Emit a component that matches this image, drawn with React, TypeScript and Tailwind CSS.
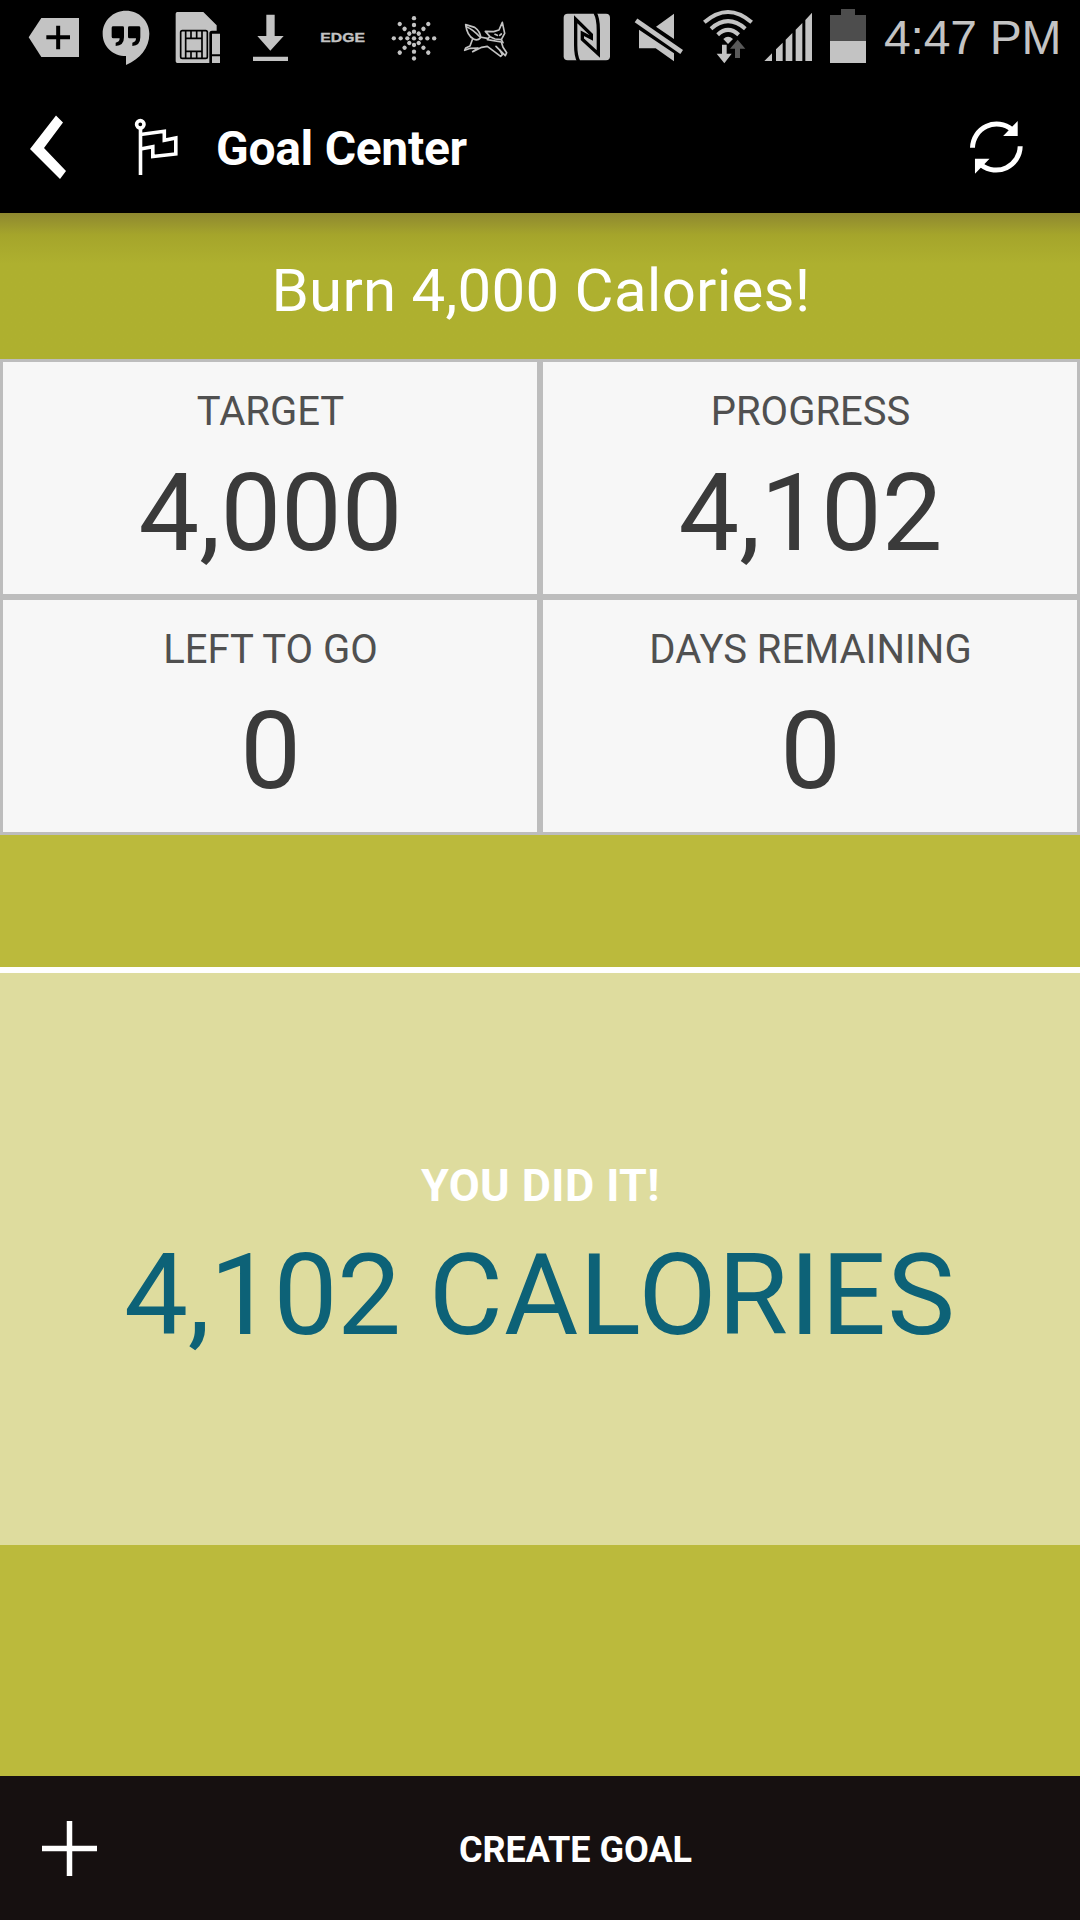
import React from "react";

const stats = [
  { label: "TARGET", value: "4,000" },
  { label: "PROGRESS", value: "4,102" },
  { label: "LEFT TO GO", value: "0" },
  { label: "DAYS REMAINING", value: "0" },
];

// dots of the starburst notification icon
const rays = [0, 45, 90, 135, 180, 225, 270, 315];

function StatusIcon({
  viewBox,
  className = "w-[72px]",
  children,
}: {
  viewBox: string;
  className?: string;
  children: React.ReactNode;
}) {
  return (
    <svg
      viewBox={viewBox}
      className={`h-[75px] shrink-0 ${className}`}
      fill="#c3c3c3"
    >
      {children}
    </svg>
  );
}

function StatusBar() {
  return (
    <div className="flex h-[75px] items-center bg-black pl-[18px]">
      <StatusIcon viewBox="54 0 216 225">
        <path d="M86 112L124 54H237V171H124Z" />
        <path d="M139 112H210M174.500 77V148" stroke="#000" strokeWidth="12" />
      </StatusIcon>
      <StatusIcon viewBox="270 0 216 225">
        <path d="M378 32C417 32 448 62 448 101C448 144 420 176 378 195V168C339 168 308 140 308 101C308 62 339 32 378 32Z" />
        <path
          d="M340 79H368Q372 79 372 83V112Q372 137 347 138V128Q359 126 359 115H340Q335 115 335 110V83Q335 79 340 79ZM388 79H416Q421 79 421 83V112Q421 137 397 138V128Q408 126 408 115H388Q384 115 384 110V83Q384 79 388 79Z"
          fill="#000"
        />
      </StatusIcon>
      <StatusIcon viewBox="486 0 216 225">
        <path d="M532 36H610L650 76V92H636Q628 92 628 100V189H532Q527 189 527 184V41Q527 36 532 36Z" />
        <path d="M636 101H660V163H636ZM636 169H660V189H636Z" />
        <g fill="none" stroke="#000" strokeWidth="5">
          <rect x="542" y="92" width="80" height="83" rx="5" />
          <path d="M557 92V175M606 92V175M557 115H606M557 154H606M573 92V115M590 92V115M573 154V175M590 154V175" />
        </g>
      </StatusIcon>
      <StatusIcon viewBox="-18 0 216 225">
        <path d="M79 44H104V108H131L91 152L52 108H79ZM39 170H144V183H39Z" />
      </StatusIcon>
      <StatusIcon viewBox="198 0 216 225">
        <text
          x="241"
          y="127"
          fontFamily="Liberation Sans, sans-serif"
          fontWeight="700"
          fontSize="39"
          stroke="#c3c3c3"
          strokeWidth="1"
          textLength="134"
          lengthAdjust="spacingAndGlyphs"
        >
          EDGE
        </text>
      </StatusIcon>
      <StatusIcon viewBox="414 0 216 225">
        <circle cx="522" cy="115" r="6.500" />
        {rays.map((angle) => (
          <g key={angle} transform={`rotate(${angle} 522 115)`}>
            <circle cx="542" cy="115" r="6.500" />
            <circle cx="562" cy="115" r="6.500" />
            <circle cx="582.500" cy="115" r="6.500" />
          </g>
        ))}
      </StatusIcon>
      <StatusIcon viewBox="630 0 216 225">
        <g
          fill="none"
          stroke="#c3c3c3"
          strokeWidth="5"
          strokeLinejoin="round"
          strokeLinecap="round"
        >
          <path d="M677 74L704 82Q721 94 722 113Q713 123 702 118Q681 108 677 74Z" />
          <path d="M679 80Q699 88 720 111L742 115" />
          <path d="M736 94L761 95L777 90L787 67L794 100L784 119L765 117L750 110Z" />
          <path d="M748 111L742 119L784 126L789 142L800 158L796 167L780 151L787 164L782 169L758 151L742 139L725 142L698 155L714 144L691 145L674 151L677 144L690 138L697 119" />
          <path d="M765 103L772 106M784 102L779 106M784 119L789 128M768 139L780 151" />
        </g>
      </StatusIcon>

      <div className="ml-auto flex items-center">
        <StatusIcon viewBox="33 0 216 225">
          <rect x="71" y="41" width="139" height="140" rx="12" />
          <path
            d="M116 184Q107 168 107 135V58L154 104V114L127 100V118L175 162V90Q175 55 165 38"
            fill="none"
            stroke="#000"
            strokeWidth="10"
          />
        </StatusIcon>
        <StatusIcon viewBox="249 0 216 225">
          <path d="M297 89L402 160V184L347 145H297ZM348 80L402 41V117Z" />
          <path d="M288 61L425 156" stroke="#c3c3c3" strokeWidth="14" />
        </StatusIcon>
        <StatusIcon viewBox="465 0 195 225" className="w-[65px]">
          <g fill="none" stroke="#c3c3c3" strokeWidth="12">
            <path d="M493 67Q564 5 635 67" />
            <path d="M513 86Q564 41 616 86" />
            <path d="M533 104Q564 75 596 104" />
          </g>
          <path d="M550 117Q564 104 579 117L564 132Z" />
          <path d="M546 134H560V161H575L553 190L530 161H546Z" />
          <path d="M593 119L616 146H600V174H585V146H570Z" fill="#595959" />
        </StatusIcon>
        <StatusIcon viewBox="660 0 180 225" className="w-[60px]">
          <path d="M673 183L696 160V183ZM708 148L728 128V183H708ZM737 119L757 99V183H737ZM767 89L787 69V183H767ZM796 60L816 38V183H796Z" />
        </StatusIcon>
        <StatusIcon viewBox="30 0 165 225" className="w-[55px]">
          <path d="M93 27H135V45H168V123H60V45H93Z" fill="#4d4d4d" />
          <path d="M60 123H168V189H60Z" />
        </StatusIcon>
        <span className="w-[205px] pl-[9px] font-['Liberation_Sans',sans-serif] text-[48px] leading-none tracking-[-0.2px] whitespace-nowrap text-[#c3c3c3]">
          4:47 PM
        </span>
      </div>
    </div>
  );
}

function Header() {
  return (
    <header className="flex h-[138px] items-center bg-black pt-[6px] pl-[30px]">
      <svg viewBox="0 0 36 64" className="h-16 w-9" fill="#fff">
        <path d="M26 0.500L33 7.500L14 33L36 56L30 64L0 34Z" />
      </svg>
      <svg
        viewBox="134 118 46 60"
        className="mt-0.5 ml-[68px] h-[60px] w-[46px]"
        fill="none"
        stroke="#fff"
        strokeWidth="3.600"
      >
        <circle cx="140.300" cy="124.300" r="3.700" />
        <path d="M140.500 128V175" />
        <path d="M140.500 134.500L164.300 131.300V140.300L175.800 138V154L152.800 156.500V146.700L140.500 149" />
      </svg>
      <h1 className="mt-[3px] ml-9 text-[48px] leading-[60px] font-bold tracking-[-0.3px]">
        Goal Center
      </h1>
      <svg
        viewBox="90 90 160 160"
        className="mr-[57px] ml-auto h-[53px] w-[53px]"
        fill="none"
        stroke="#fff"
        strokeWidth="15"
      >
        <path d="M97.500 171A73 73 0 0 1 217 116M241.500 166A73 73 0 0 1 124 223" />
        <path d="M234 90V135H190ZM105 249V204H149Z" fill="#fff" stroke="none" />
      </svg>
    </header>
  );
}

export default function App() {
  return (
    <div className="flex h-[1920px] w-[1080px] flex-col overflow-hidden bg-[#bbba3c] font-[Roboto,sans-serif] text-white">
      <StatusBar />
      <Header />

      <div className="flex h-[146px] items-center justify-center bg-linear-to-b from-[#8e882f] via-[#a5a52b] via-15% to-[#aeb02f] to-35% pt-2.5 pl-[2px]">
        <h2 className="text-[60px] leading-none tracking-[0.25px]">
          Burn 4,000 Calories!
        </h2>
      </div>

      <div className="grid grid-cols-2">
        {stats.map((stat) => (
          <div
            key={stat.label}
            className="flex h-[238px] flex-col items-center border-[3px] border-[#bdbdbd] bg-[#f7f7f7] pt-[30px] pl-px"
          >
            <div className="text-[40px] leading-none text-[#505050]">
              {stat.label}
            </div>
            <div className="mt-[27px] text-[108px] leading-none text-[#3a3a3a]">
              {stat.value}
            </div>
          </div>
        ))}
      </div>

      <div className="mt-[132px] flex h-[578px] flex-col items-center border-t-[6px] border-white bg-[#dedc9e] pt-[190px]">
        <div className="pl-px text-[45px] leading-none font-bold tracking-[0.4px]">
          YOU DID IT!
        </div>
        <div className="mt-[30px] text-[114px] leading-none whitespace-nowrap text-[#0d6277]">
          <span className="tracking-[-0.4px]">4,102 </span>
          <span className="tracking-[1.1px]">CALORIES</span>
        </div>
      </div>

      <footer className="mt-auto flex h-36 items-center bg-[#161010] pl-[42px]">
        <svg
          viewBox="0 0 55 55"
          className="h-[55px] w-[55px]"
          stroke="#fff"
          strokeWidth="5.500"
        >
          <path d="M27.500 0V55M0 27.500H55" />
        </svg>
        <div className="mt-[3px] ml-[362px] text-[36px] leading-none font-bold">
          CREATE GOAL
        </div>
      </footer>
    </div>
  );
}
